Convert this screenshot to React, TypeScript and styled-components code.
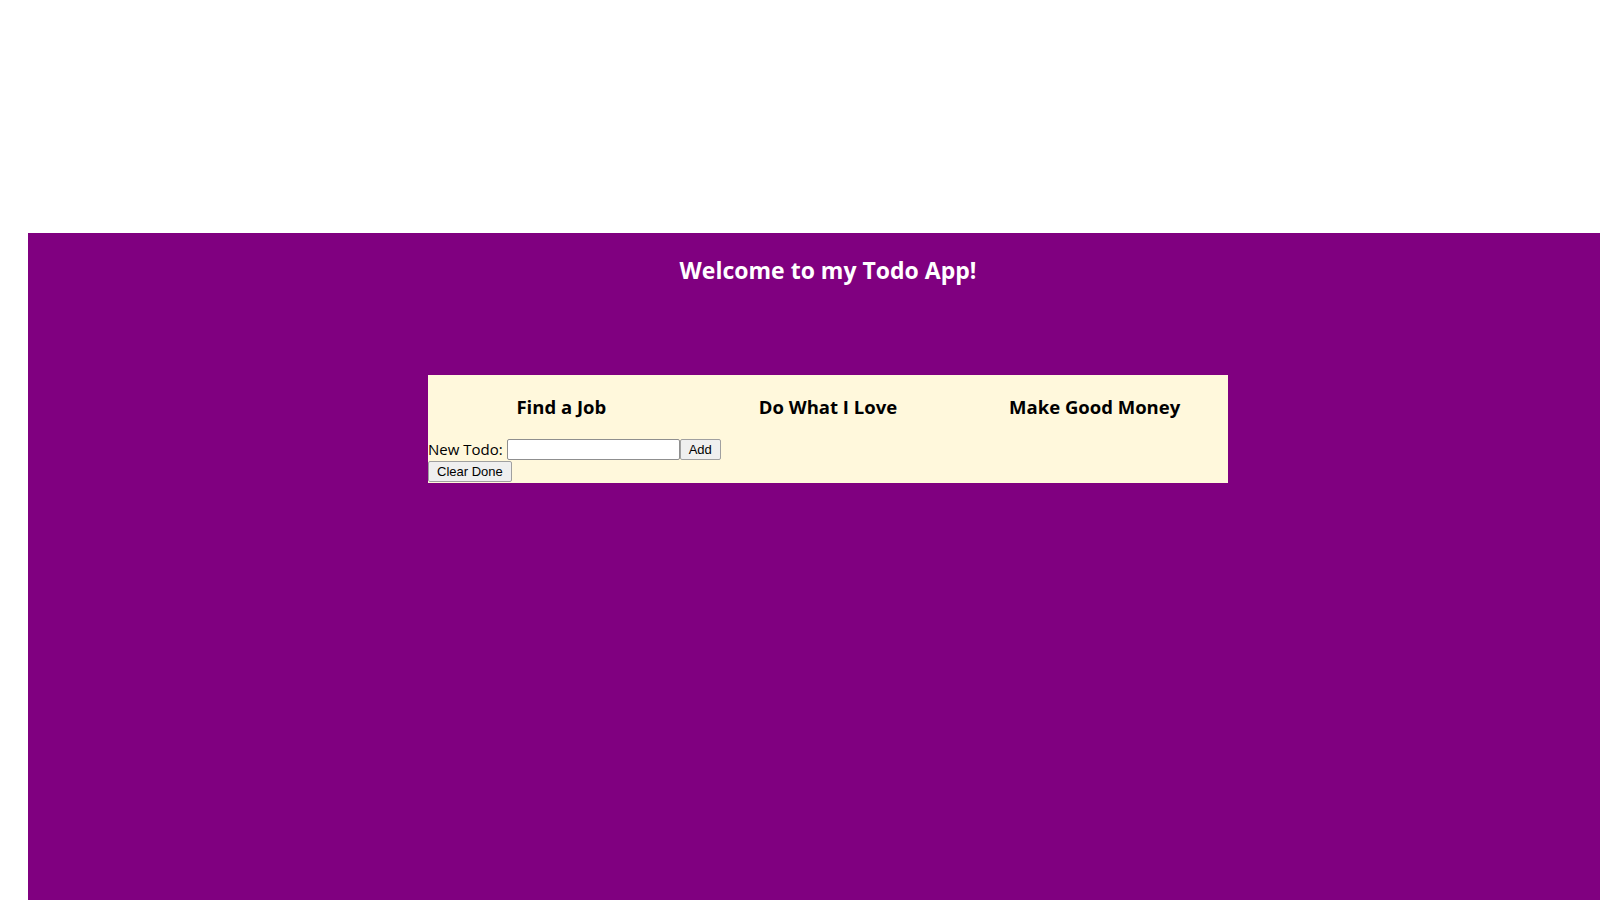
import styled, { createGlobalStyle } from "styled-components";

const GlobalStyle = createGlobalStyle`
  html, body {
    margin: 0;
    padding: 0;
    overflow: hidden;
    background: #ffffff;
  }
`;

const Page = styled.div`
  padding: 233px 0 0 28px;
  height: 900px;
  box-sizing: border-box;
`;

const Board = styled.main`
  width: 1600px;
  height: 667px;
  background: #800080;
  display: flex;
  flex-direction: column;
  align-items: center;
  font-family: "Open Sans", "Noto Sans", sans-serif;
`;

const Title = styled.h1`
  margin: 21px 0 0;
  font-size: 23px;
  line-height: 32px;
  font-weight: 700;
  color: #ffffff;
`;

const Panel = styled.section`
  width: 800px;
  margin-top: 89px;
  background: #fff8dc;
  display: flex;
  flex-direction: column;
  align-items: flex-start;
`;

const Columns = styled.div`
  width: 100%;
  display: grid;
  grid-template-columns: repeat(3, 1fr);
  padding-top: 20px;
  margin-bottom: 19px;
`;

const ColumnTitle = styled.h3`
  margin: 0;
  text-align: center;
  font-size: 18.5px;
  line-height: 24px;
  font-weight: 700;
  color: #000000;
`;

const FormRow = styled.form`
  display: flex;
  align-items: center;
  height: 22px;
  margin: 0;
`;

const Label = styled.label`
  font-size: 15px;
  color: #000000;
  margin-right: 4px;
`;

const TextInput = styled.input`
  width: 173px;
  height: 21px;
  box-sizing: border-box;
  border: 1px solid #8f8f8f;
  border-radius: 2px;
  background: #ffffff;
  padding: 1px 2px;
  margin: 0;
`;

const Button = styled.button`
  height: 21px;
  box-sizing: border-box;
  padding: 0 8px;
  margin: 0;
  font-family: "Liberation Sans", Arial, sans-serif;
  font-size: 13px;
  color: #000000;
  background: #efefef;
  border: 1px solid #a0a0a0;
  border-radius: 2px;
`;

const ClearButton = styled(Button)`
  margin-top: 1px;
  margin-bottom: 1px;
`;

const columns = ["Find a Job", "Do What I Love", "Make Good Money"];

export default function App() {
  return (
    <Page>
      <GlobalStyle />
      <Board>
        <Title>Welcome to my Todo App!</Title>
        <Panel>
          <Columns>
            {columns.map((name) => (
              <ColumnTitle key={name}>{name}</ColumnTitle>
            ))}
          </Columns>
          <FormRow onSubmit={(e) => e.preventDefault()}>
            <Label htmlFor="new-todo">New Todo:</Label>
            <TextInput id="new-todo" type="text" />
            <Button type="submit">Add</Button>
          </FormRow>
          <ClearButton type="button">Clear Done</ClearButton>
        </Panel>
      </Board>
    </Page>
  );
}
